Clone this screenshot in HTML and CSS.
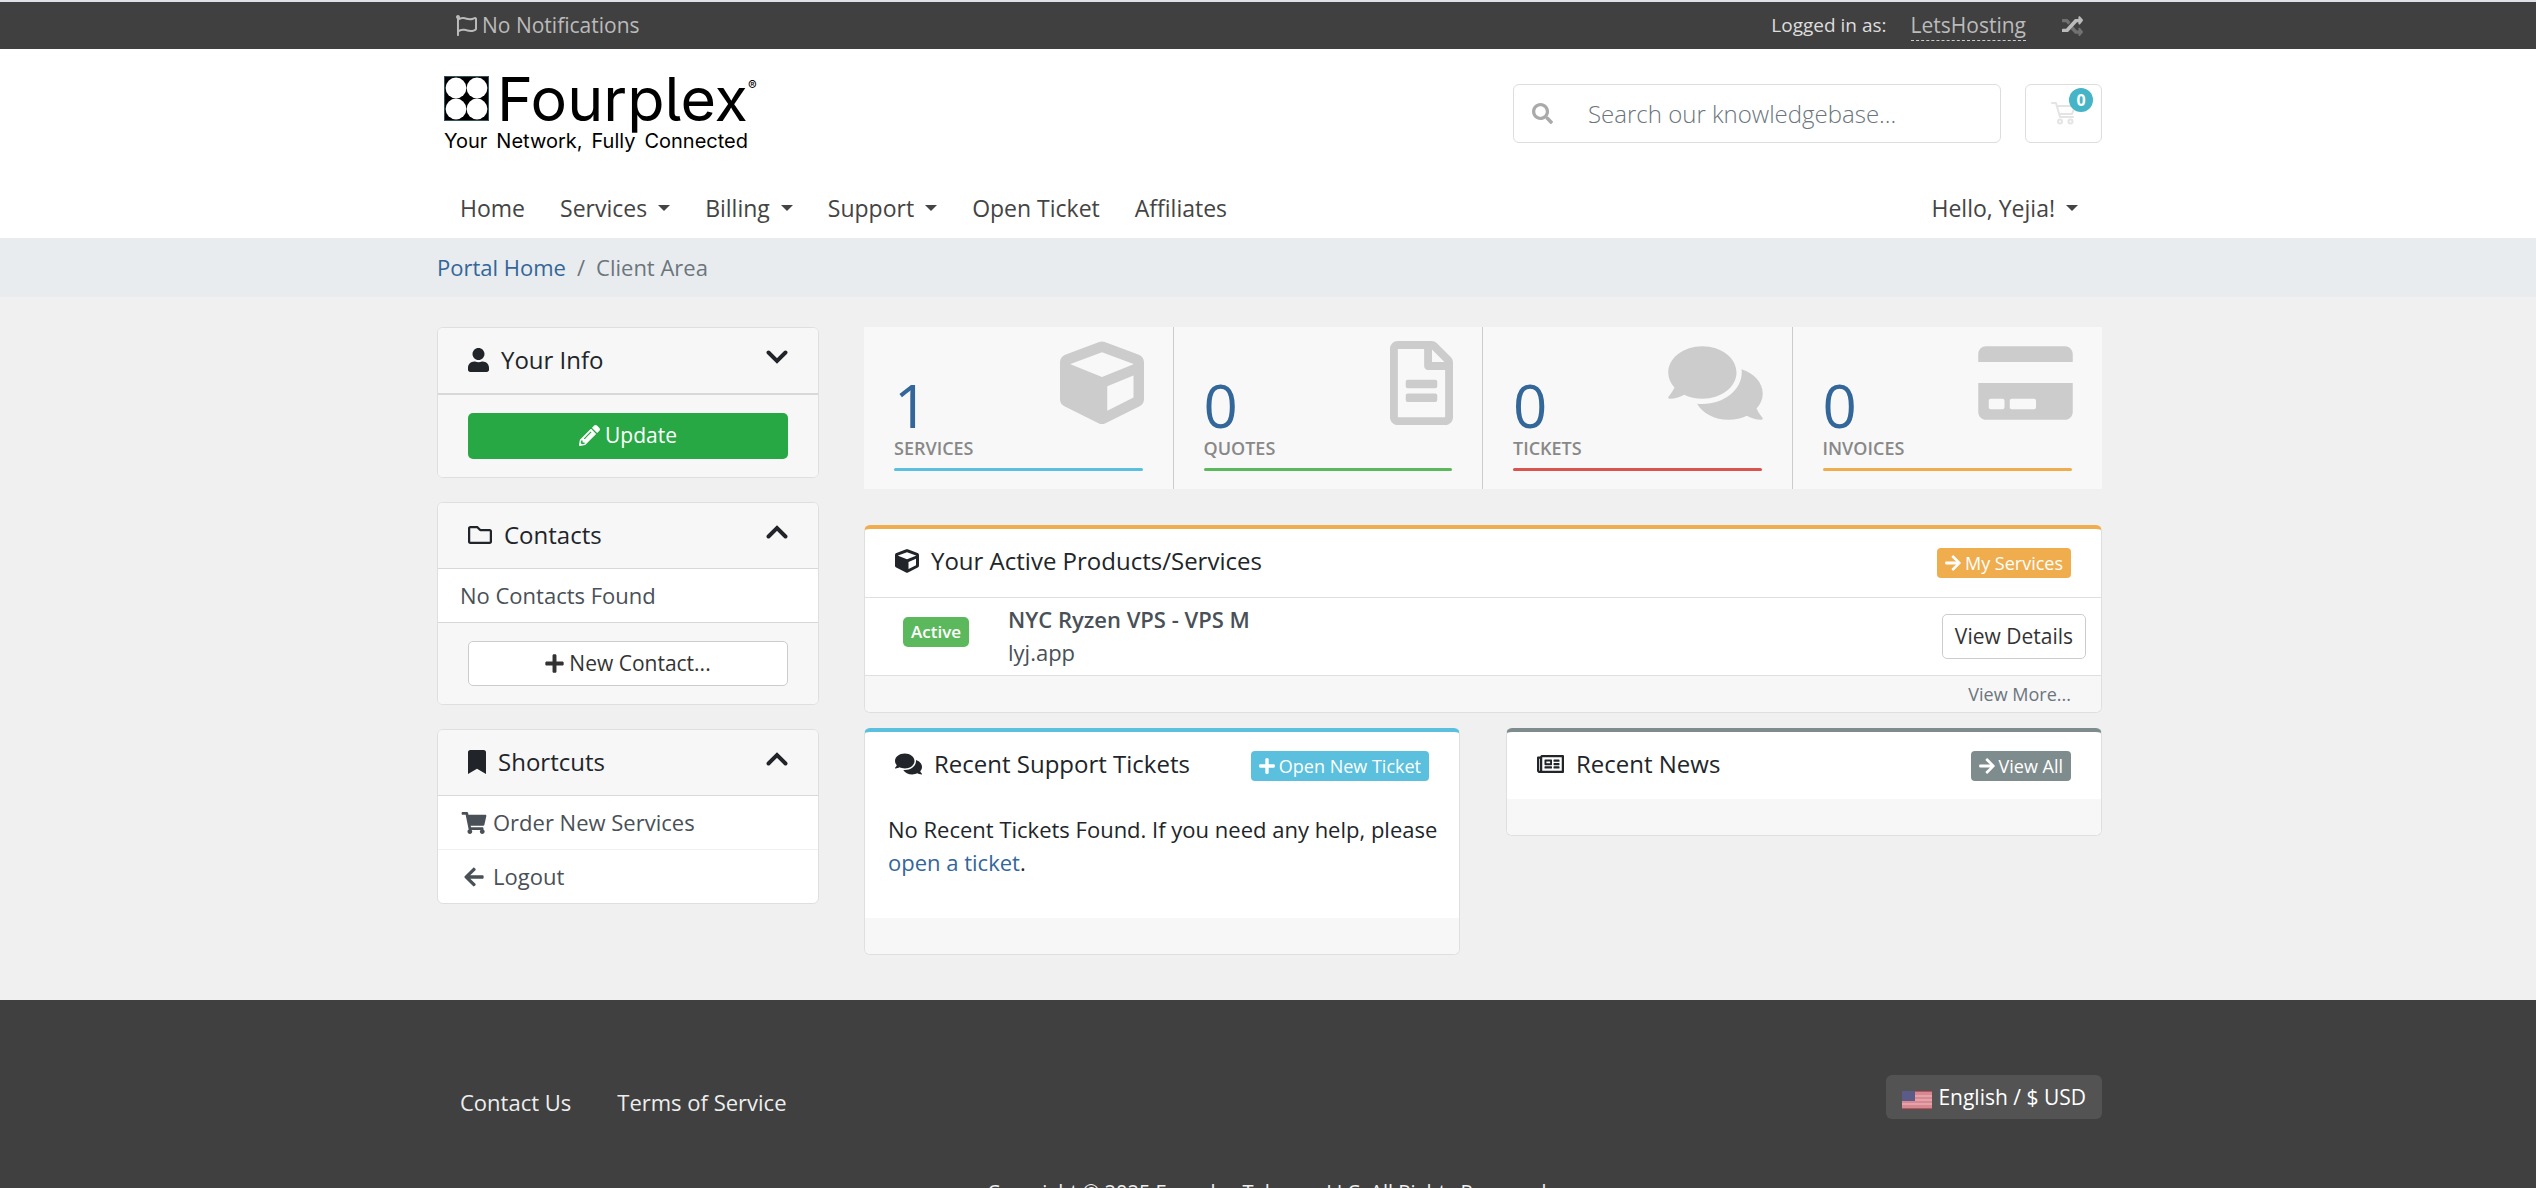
FILE: index.html
```html
<!DOCTYPE html>
<html lang="en">
<head>
<meta charset="utf-8">
<meta name="viewport" content="width=device-width, initial-scale=1">
<title>Client Area - Fourplex</title>
<link rel="stylesheet" href="styles.css">
</head>
<body>
<svg class="sprite" aria-hidden="true">
  <symbol id="i-flag" viewBox="0 0 512 512"><path d="M336.174 80c-49.132 0-93.305-32-161.913-32-31.301 0-58.303 6.482-80.721 15.168a48.04 48.04 0 0 0 2.142-20.727C93.067 19.575 74.167 1.594 51.201.104 23.242-1.710 0 20.431 0 48c0 17.764 9.657 33.262 24 41.562V496c0 8.837 7.163 16 16 16h16c8.837 0 16-7.163 16-16v-83.443C109.869 395.280 143.259 384 199.826 384c49.132 0 93.305 32 161.913 32 58.479 0 101.972-22.617 128.548-39.981C503.846 367.161 512 352.051 512 335.855V95.937c0-34.459-35.264-57.768-66.904-44.117C409.193 67.309 371.641 80 336.174 80zM464 336c-21.783 15.412-60.824 32-102.261 32-59.945 0-102.002-32-161.913-32-43.361 0-96.379 9.403-127.826 24V128c21.784-15.412 60.824-32 102.261-32 59.945 0 102.002 32 161.913 32 43.271 0 96.320-17.366 127.826-32v240z"/></symbol>
  <symbol id="i-random" viewBox="0 0 512 512"><path opacity=".4" d="M24 96h98c7 0 13 3 18 8l68 74-53 58-57-60H24c-13 0-24-11-24-24v-32c0-13 11-24 24-24zM270 276l53 57 42 43h35v-40c0-21 26-32 41-17l64 80c9 9 9 25 0 34l-64 72c-15 15-41 4-41-17v-32h-71c-7 0-13-3-18-8l-95-100z"/><path d="M0 416v-56c0-13 11-24 24-24h74l213-232c5-5 11-8 18-8h71V56c0-21 26-32 41-17l64 72c9 9 9 25 0 34l-64 80c-15 15-41 4-41-17v-32h-35L152 408c-5 5-11 8-18 8z"/></symbol>
  <symbol id="i-search" viewBox="0 0 512 512"><path d="M505 442.700L405.300 343c-4.500-4.500-10.600-7-17-7H372c27.600-35.300 44-79.700 44-128C416 93.100 322.900 0 208 0S0 93.100 0 208s93.100 208 208 208c48.300 0 92.700-16.400 128-44v16.300c0 6.400 2.500 12.500 7 17l99.700 99.700c9.400 9.400 24.600 9.400 33.900 0l28.300-28.300c9.400-9.400 9.400-24.600.1-34zM208 336c-70.700 0-128-57.200-128-128 0-70.700 57.200-128 128-128 70.700 0 128 57.200 128 128 0 70.700-57.200 128-128 128z"/></symbol>
  <symbol id="i-cart-line" viewBox="0 0 24 24"><g fill="none" stroke="currentColor" stroke-width="2" stroke-linecap="round" stroke-linejoin="round"><path d="M1 2h4l4 14h13M6 5h18l-3 8H8"/><circle cx="9" cy="20.500" r="2"/><circle cx="19.500" cy="20.500" r="2"/></g></symbol>
  <symbol id="i-user" viewBox="0 0 448 512"><path d="M224 256c70.700 0 128-57.300 128-128S294.700 0 224 0 96 57.300 96 128s57.300 128 128 128zm89.600 32h-16.700c-22.200 10.200-46.900 16-72.900 16s-50.600-5.800-72.900-16h-16.700C60.200 288 0 348.200 0 422.400V464c0 26.500 21.500 48 48 48h352c26.500 0 48-21.500 48-48v-41.600c0-74.200-60.200-134.400-134.400-134.400z"/></symbol>
  <symbol id="i-chevron" viewBox="0 0 22 14"><path d="M2.500 2.500L11 11l8.500-8.500" fill="none" stroke="currentColor" stroke-width="3.900" stroke-linecap="round"/></symbol>
  <symbol id="i-pencil" viewBox="0 0 512 512"><path d="M497.900 142.100l-46.100 46.100c-4.700 4.700-12.300 4.700-17 0l-111-111c-4.700-4.700-4.700-12.300 0-17l46.100-46.100c18.700-18.700 49.100-18.700 67.900 0l60.100 60.100c18.800 18.700 18.800 49.100 0 67.900zM284.200 99.800L21.600 362.400.4 483.900c-2.900 16.400 11.400 30.600 27.800 27.800l121.500-21.300 262.600-262.600c4.700-4.700 4.700-12.300 0-17l-111-111c-4.800-4.700-12.400-4.700-17.100 0zM124.100 339.900c-5.500-5.500-5.500-14.300 0-19.800l154-154c5.500-5.500 14.300-5.500 19.800 0s5.500 14.300 0 19.800l-154 154c-5.500 5.500-14.300 5.500-19.800 0zM88 424h48v36.300l-64.500 11.300-31.100-31.100L51.700 376H88v48z"/></symbol>
  <symbol id="i-folder" viewBox="0 0 512 512"><path d="M464 128H272l-54.630-54.630c-6-6-14.140-9.370-22.630-9.370H48C21.490 64 0 85.490 0 112v288c0 26.510 21.490 48 48 48h416c26.510 0 48-21.490 48-48V176c0-26.510-21.490-48-48-48zm0 272H48V112h140.120l54.630 54.630c6 6 14.140 9.370 22.630 9.370H464v224z"/></symbol>
  <symbol id="i-plus" viewBox="0 0 448 512"><path d="M416 208H272V64c0-17.670-14.330-32-32-32h-32c-17.670 0-32 14.330-32 32v144H32c-17.670 0-32 14.330-32 32v32c0 17.670 14.330 32 32 32h144v144c0 17.670 14.330 32 32 32h32c17.670 0 32-14.330 32-32V304h144c17.670 0 32-14.330 32-32v-32c0-17.670-14.330-32-32-32z"/></symbol>
  <symbol id="i-bookmark" viewBox="0 0 384 512"><path d="M0 512V48C0 21.490 21.490 0 48 0h288c26.510 0 48 21.490 48 48v464L192 400 0 512z"/></symbol>
  <symbol id="i-cart" viewBox="0 0 576 512"><path d="M528.120 301.319l47.273-208C578.806 78.301 567.391 64 551.990 64H159.208l-9.166-44.810C147.758 8.021 137.930 0 126.529 0H24C10.745 0 0 10.745 0 24v16c0 13.255 10.745 24 24 24h69.883l70.248 343.435C147.325 417.100 136 435.222 136 456c0 30.928 25.072 56 56 56s56-25.072 56-56c0-15.674-6.447-29.835-16.824-40h209.647C430.447 426.165 424 440.326 424 456c0 30.928 25.072 56 56 56s56-25.072 56-56c0-22.172-12.888-41.332-31.579-50.405l5.517-24.276c3.413-15.018-8.002-29.319-23.403-29.319H218.117l-6.545-32h293.145c11.206 0 20.920-7.754 23.403-18.681z"/></symbol>
  <symbol id="i-left" viewBox="0 0 448 512"><path d="M257.500 445.100l-22.200 22.200c-9.400 9.400-24.600 9.400-33.900 0L7 273c-9.400-9.400-9.400-24.600 0-33.900L201.400 44.700c9.400-9.400 24.600-9.400 33.900 0l22.200 22.200c9.500 9.500 9.300 25-.4 34.300L136.600 216H424c13.300 0 24 10.700 24 24v32c0 13.300-10.700 24-24 24H136.600l120.500 114.800c9.800 9.300 10 24.800.4 34.300z"/></symbol>
  <symbol id="i-right" viewBox="0 0 448 512"><path d="M190.500 66.900l22.200-22.200c9.400-9.400 24.600-9.400 33.900 0L441 239c9.400 9.400 9.400 24.600 0 33.900L246.600 467.300c-9.400 9.400-24.600 9.400-33.900 0l-22.200-22.200c-9.500-9.500-9.300-25 .4-34.300L311.400 296H24c-13.300 0-24-10.700-24-24v-32c0-13.300 10.700-24 24-24h287.400L190.900 101.200c-9.800-9.300-10-24.800-.4-34.300z"/></symbol>
  <symbol id="i-cube" viewBox="0 0 512 512"><path d="M239.100 6.300l-208 78c-18.700 7-31.100 25-31.100 45v225.100c0 18.200 10.300 34.800 26.500 42.900l208 104c13.500 6.800 29.400 6.800 42.900 0l208-104c16.300-8.100 26.500-24.800 26.500-42.900V129.300c0-20-12.400-37.900-31.100-44.900l-208-78C262 2.200 250 2.200 239.100 6.300zM256 68.400l192 72v1.100l-192 78-192-78v-1.100l192-72zm32 356V275.500l160-65v133.900l-160 80z"/></symbol>
  <symbol id="i-file" viewBox="0 0 384 512"><path d="M288 248v28c0 6.600-5.400 12-12 12H108c-6.600 0-12-5.400-12-12v-28c0-6.600 5.400-12 12-12h168c6.600 0 12 5.400 12 12zm-12 72H108c-6.600 0-12 5.400-12 12v28c0 6.600 5.400 12 12 12h168c6.600 0 12-5.400 12-12v-28c0-6.600-5.400-12-12-12zm108-188.100V464c0 26.500-21.500 48-48 48H48c-26.500 0-48-21.500-48-48V48C0 21.500 21.500 0 48 0h204.100C264.800 0 277 5.100 286 14.100L369.900 98c9 8.900 14.100 21.200 14.100 33.900zm-128-80V128h76.100L256 51.900zM336 464V176H232c-13.300 0-24-10.700-24-24V48H48v416h288z"/></symbol>
  <symbol id="i-comments" viewBox="0 0 576 512"><path d="M416 192c0-88.400-93.100-160-208-160S0 103.600 0 192c0 34.300 14.100 65.900 38 92-13.400 30.200-35.500 54.200-35.800 54.500-2.200 2.300-2.800 5.700-1.500 8.700S4.800 352 8 352c36.600 0 66.900-12.300 88.700-25 32.200 15.700 70.300 25 111.300 25 114.900 0 208-71.600 208-160zm122 220c23.900-26 38-57.700 38-92 0-66.900-53.500-124.200-129.300-148.100.9 6.600 1.300 13.300 1.300 20.100 0 105.900-107.700 192-240 192-10.800 0-21.300-.8-31.700-1.900C207.800 439.600 281.800 480 368 480c41 0 79.100-9.200 111.300-25 21.800 12.700 52.100 25 88.700 25 3.200 0 6.100-1.900 7.300-4.800 1.300-2.900.7-6.300-1.500-8.700-.3-.3-22.400-24.200-35.800-54.500z"/></symbol>
  <symbol id="i-card" viewBox="0 0 576 512"><path d="M0 432c0 26.500 21.500 48 48 48h480c26.500 0 48-21.500 48-48V256H0v176zm192-68c0-6.600 5.400-12 12-12h136c6.600 0 12 5.400 12 12v40c0 6.600-5.400 12-12 12H204c-6.600 0-12-5.400-12-12v-40zm-128 0c0-6.600 5.400-12 12-12h72c6.600 0 12 5.400 12 12v40c0 6.600-5.400 12-12 12H76c-6.600 0-12-5.400-12-12v-40zM576 80v48H0V80c0-26.500 21.500-48 48-48h480c26.500 0 48 21.500 48 48z"/></symbol>
  <symbol id="i-news" viewBox="0 0 576 512"><path d="M552 64H112c-20.858 0-38.643 13.377-45.248 32H24c-13.255 0-24 10.745-24 24v272c0 30.928 25.072 56 56 56h496c13.255 0 24-10.745 24-24V88c0-13.255-10.745-24-24-24zM48 392V144h16v248c0 4.411-3.589 8-8 8s-8-3.589-8-8zm480 8H111.422c.374-2.614.578-5.283.578-8V112h416v288zM172 280h136c6.627 0 12-5.373 12-12v-96c0-6.627-5.373-12-12-12H172c-6.627 0-12 5.373-12 12v96c0 6.627 5.373 12 12 12zm28-80h80v40h-80v-40zm-40 140v-24c0-6.627 5.373-12 12-12h136c6.627 0 12 5.373 12 12v24c0 6.627-5.373 12-12 12H172c-6.627 0-12-5.373-12-12zm192 0v-24c0-6.627 5.373-12 12-12h104c6.627 0 12 5.373 12 12v24c0 6.627-5.373 12-12 12H364c-6.627 0-12-5.373-12-12zm0-144v-24c0-6.627 5.373-12 12-12h104c6.627 0 12 5.373 12 12v24c0 6.627-5.373 12-12 12H364c-6.627 0-12-5.373-12-12zm0 72v-24c0-6.627 5.373-12 12-12h104c6.627 0 12 5.373 12 12v24c0 6.627-5.373 12-12 12H364c-6.627 0-12-5.373-12-12z"/></symbol>
</svg>

<header>
  <div class="topbar">
    <div class="container topbar-inner">
      <button class="notifications" type="button"><svg class="icon-21"><use href="#i-flag"/></svg>No Notifications</button>
      <div class="account">
        <span class="account-label">Logged in as:</span>
        <a class="account-name" href="#">LetsHosting</a>
        <button class="switch" type="button" aria-label="Switch account"><svg class="icon-21"><use href="#i-random"/></svg></button>
      </div>
    </div>
  </div>

  <div class="masthead">
    <div class="container masthead-row">
      <a class="logo" href="#" aria-label="Fourplex">
        <span class="logo-main">
          <svg class="logo-mark" viewBox="0 0 45 45"><rect x=".5" y=".5" width="44" height="44" stroke="#35525c"/><g fill="#fff"><circle cx="12" cy="12" r="10.400"/><circle cx="33" cy="12" r="10.400"/><circle cx="12" cy="33" r="10.400"/><circle cx="33" cy="33" r="10.400"/></g></svg>
          <span class="logo-name">Fourplex</span><span class="logo-reg">®</span>
        </span>
        <span class="logo-tagline"><span>Your</span> <span>Network,</span> <span>Fully</span> <span>Connected</span></span>
      </a>
      <div class="tools">
        <form class="search">
          <button type="submit" aria-label="Search"><svg class="icon-21"><use href="#i-search"/></svg></button>
          <input type="text" placeholder="Search our knowledgebase..." aria-label="Search our knowledgebase">
        </form>
        <a class="cart" href="#" aria-label="Shopping cart"><svg class="icon-24"><use href="#i-cart-line"/></svg><span class="cart-count">0</span></a>
      </div>
    </div>
    <nav class="container menu">
      <a href="#">Home</a>
      <button class="drop" type="button">Services</button>
      <button class="drop" type="button">Billing</button>
      <button class="drop" type="button">Support</button>
      <a href="#">Open Ticket</a>
      <a href="#">Affiliates</a>
      <button class="drop menu-user" type="button">Hello, Yejia!</button>
    </nav>
  </div>
</header>

<nav class="breadcrumb">
  <ol class="container">
    <li><a href="#">Portal Home</a></li>
    <li>Client Area</li>
  </ol>
</nav>

<main class="container layout">
  <aside class="sidebar">
    <section class="card">
      <h3 class="side-head side-head-thick"><svg class="w-user"><use href="#i-user"/></svg>Your Info<svg class="chevron"><use href="#i-chevron"/></svg></h3>
      <div class="side-foot"><button class="btn btn-green" type="button"><svg class="icon-21"><use href="#i-pencil"/></svg>Update</button></div>
    </section>
    <section class="card">
      <h3 class="side-head"><svg class="w-folder"><use href="#i-folder"/></svg>Contacts<svg class="chevron chevron-up"><use href="#i-chevron"/></svg></h3>
      <div class="side-item side-last">No Contacts Found</div>
      <div class="side-foot"><button class="btn btn-plain" type="button"><svg class="icon-plus"><use href="#i-plus"/></svg>New Contact...</button></div>
    </section>
    <section class="card">
      <h3 class="side-head"><svg class="w-bookmark"><use href="#i-bookmark"/></svg>Shortcuts<svg class="chevron chevron-up"><use href="#i-chevron"/></svg></h3>
      <a class="side-item" href="#"><svg class="icon-fw"><use href="#i-cart"/></svg>Order New Services</a>
      <a class="side-item" href="#"><svg class="icon-fw"><use href="#i-left"/></svg>Logout</a>
    </section>
  </aside>

  <div class="content">
    <div class="tiles">
      <a class="tile tile-blue" href="#"><svg class="tile-cube"><use href="#i-cube"/></svg><span class="stat">1</span><span class="tile-title">Services</span></a>
      <a class="tile tile-green" href="#"><svg class="tile-file"><use href="#i-file"/></svg><span class="stat">0</span><span class="tile-title">Quotes</span></a>
      <a class="tile tile-red" href="#"><svg class="tile-wide"><use href="#i-comments"/></svg><span class="stat">0</span><span class="tile-title">Tickets</span></a>
      <a class="tile tile-gold" href="#"><svg class="tile-wide"><use href="#i-card"/></svg><span class="stat">0</span><span class="tile-title">Invoices</span></a>
    </div>

    <section class="card panel panel-gold">
      <h3 class="panel-head panel-head-line"><svg class="icon-24"><use href="#i-cube"/></svg>Your Active Products/Services<a class="btn-sm bg-gold" href="#"><svg><use href="#i-right"/></svg>My Services</a></h3>
      <div class="product">
        <span class="badge">Active</span>
        <a class="product-name" href="#"><b>NYC Ryzen VPS - VPS M</b><span>lyj.app</span></a>
        <button class="btn btn-plain btn-details" type="button">View Details</button>
      </div>
      <div class="panel-foot"><a href="#">View More...</a></div>
    </section>

    <div class="panels">
      <section class="card panel panel-blue">
        <h3 class="panel-head"><svg class="w-wide"><use href="#i-comments"/></svg>Recent Support Tickets<a class="btn-sm bg-blue" href="#"><svg><use href="#i-plus"/></svg>Open New Ticket</a></h3>
        <p class="panel-text">No Recent Tickets Found. If you need any help, please <a href="#">open a ticket</a>.</p>
        <div class="panel-foot"></div>
      </section>
      <section class="card panel panel-gray">
        <h3 class="panel-head"><svg class="w-wide"><use href="#i-news"/></svg>Recent News<a class="btn-sm bg-gray" href="#"><svg><use href="#i-right"/></svg>View All</a></h3>
        <div class="panel-foot"></div>
      </section>
    </div>
  </div>
</main>

<footer class="footer">
  <div class="container">
    <div class="footer-row">
      <nav class="footer-links"><a href="#">Contact Us</a><a href="#">Terms of Service</a></nav>
      <button class="locale" type="button">
        <svg class="us" viewBox="0 0 30 18"><rect width="30" height="18" fill="#d98791"/><path d="M0 5h30M0 9h30M0 13h30" stroke="#e2a3aa" stroke-width="2"/><path d="M0 .5h30M0 17.500h30" stroke="#b9525c"/><rect width="13" height="10" fill="#5b5b87"/></svg>English / $ USD
      </button>
    </div>
    <p class="copyright">Copyright © 2025 Fourplex Telecom LLC. All Rights Reserved.</p>
  </div>
</footer>
</body>
</html>
```
FILE: styles.css
```css
*, *::before, *::after { box-sizing: border-box; }

body {
  margin: 0;
  border-top: 2px solid #dee2e6;
  background: #f0f0f0;
  color: #212529;
  font: 400 22px/33px "Open Sans", "Noto Sans", sans-serif;
  min-height: 100vh;
}

a { color: #336699; text-decoration: none; }
button, input { font: inherit; color: inherit; }
button { margin: 0; padding: 0; border: 0; background: none; cursor: pointer; }
svg { fill: currentColor; flex: none; }
h3, p, ol { margin: 0; padding: 0; font-weight: 400; }

.sprite { position: absolute; width: 0; height: 0; }
.icon-21 { width: 21px; height: 21px; }
.icon-24 { width: 24px; height: 24px; }

.container { max-width: 1668px; margin: 0 auto; padding-left: 3px; }

/* Top bar */
.topbar { background: #404040; color: #bbb; font-size: 21px; }
.topbar-inner { display: flex; justify-content: space-between; align-items: center; height: 47px; }
.notifications { display: flex; align-items: center; gap: 5px; margin-left: 19px; }
.account { display: flex; align-items: center; gap: 24px; margin-right: 19px; }
.account-label { font-size: 19px; color: #ddd; }
.account-name { color: inherit; line-height: 29px; border-bottom: 1px dashed #ccc; }
.switch { display: flex; margin-left: 12px; }

/* Masthead */
.masthead { background: #fff; color: #444; }
.masthead-row { display: flex; justify-content: space-between; align-items: flex-start; padding-top: 24px; height: 132px; }
.logo { display: block; margin-left: 7px; color: #000; font-family: Inter, sans-serif; }
.logo-main { display: flex; align-items: flex-start; }
.logo-mark { width: 45px; height: 45px; margin-top: 3px; }
.logo-name { margin-left: 8px; font-size: 61px; line-height: 53px; font-feature-settings: "cv05"; }
.logo-reg { font-size: 13px; line-height: 24px; }
.logo-tagline { display: flex; justify-content: space-between; width: 304px; padding-top: 2px; font-size: 20px; line-height: 26px; }
.tools { display: flex; gap: 24px; padding-top: 11px; }
.search { display: flex; align-items: center; width: 488px; height: 59px; border: 1px solid #ddd; border-radius: 6px; }
.search button { display: flex; width: 74px; padding-left: 18px; color: #aaa; }
.search input { flex: 1; min-width: 0; padding: 0; border: 0; outline: 0; background: none; font-size: 24px; font-weight: 300; }
.search input::placeholder { color: #6c757d; opacity: 1; }
.cart { position: relative; display: flex; width: 77px; height: 59px; padding: 16px 25px; border: 1px solid #ddd; border-radius: 6px; color: #e4e4e4; }
.cart-count { position: absolute; top: 3px; right: 8px; width: 24px; height: 24px; border-radius: 12px; background: #44b4c6; color: #fff; font-size: 16px; font-weight: 700; line-height: 24px; text-align: center; }

.menu { display: flex; align-items: center; gap: 35px; height: 57px; padding: 0 24px 3px 26px; font-size: 23px; }
.menu a { color: inherit; }
.drop { display: flex; align-items: center; gap: 11px; }
.drop::after { content: ""; border: 6px solid transparent; border-top-color: currentColor; border-bottom: 0; }
.menu-user { margin-left: auto; }

/* Breadcrumb */
.breadcrumb { background: #e8ecef; color: #6c757d; }
.breadcrumb ol { display: flex; height: 59px; align-items: center; list-style: none; }
.breadcrumb li + li::before { content: "/"; padding: 0 11px; }

/* Main layout */
.layout { display: grid; grid-template-columns: 382px minmax(0, 1fr); gap: 45px; padding-top: 30px; padding-bottom: 45px; align-items: start; }
.sidebar { display: grid; gap: 24px; }
.card { border: 1px solid #dfdfdf; border-radius: 6px; background: #fff; overflow: hidden; }

.side-head { display: flex; align-items: center; gap: 12px; padding: 14px 30px 16px; border-bottom: 1px solid #d8d8d8; background: #f7f7f7; font-size: 24px; line-height: 35px; }
.side-head-thick { border-bottom-width: 2px; }
.w-user { width: 21px; height: 24px; }
.w-folder { width: 24px; height: 24px; }
.w-bookmark { width: 18px; height: 24px; }
.w-wide { width: 27px; height: 24px; }
.chevron { width: 22px; height: 14px; margin: 0 0 6px auto; }
.chevron-up { transform: rotate(180deg); }
.side-item { display: flex; align-items: center; gap: 5px; padding: 10px 22px; color: #495057; }
.side-item + .side-item { border-top: 1px solid #f0f0f0; }
.side-last { border-bottom: 1px solid #d8d8d8; }
.icon-fw { width: 28px; height: 22px; }
.side-foot { padding: 18px 30px; background: #f7f7f7; }

.btn { display: flex; align-items: center; justify-content: center; gap: 5px; width: 100%; height: 46px; border-radius: 5px; font-size: 21px; }
.btn-green { padding-bottom: 1px; background: #28a745; color: #fff; }
.btn-plain { height: 45px; border: 1px solid #ccc; background: #fff; color: #333; }
.icon-plus { width: 19px; height: 21px; }

/* Stat tiles */
.tiles { display: grid; grid-template-columns: repeat(4, 1fr); margin-bottom: 36px; }
.tile { position: relative; display: flex; flex-direction: column; padding: 44px 30px 18px; border-right: 1px solid #ccc; background: #f8f8f8; }
.tile:last-child { border-right: 0; }
.tile svg { position: absolute; top: 14px; right: 29px; height: 84px; color: #ccc; }
.tile-cube { width: 84px; }
.tile-file { width: 63px; }
.tile-wide { width: 95px; }
.stat { color: #336699; font-size: 60px; line-height: 68px; }
.tile-title { margin-bottom: 11px; color: #888; font-size: 18px; font-weight: 600; line-height: 18px; text-transform: uppercase; }
.tile::after { content: ""; height: 3px; border-radius: 2px; background: currentColor; }
.tile-blue { color: #5bc0de; }
.tile-green { color: #5cb85c; }
.tile-red { color: #d9534f; }
.tile-gold { color: #f0ad4e; }

/* Panels */
.panel { border-top-width: 4px; }
.panel-gold { border-top-color: #f0ad4e; margin-bottom: 15px; }
.panel-blue { border-top-color: #5bc0de; }
.panel-gray { border-top-color: #7f8c8d; }
.panel-head { display: flex; align-items: center; gap: 12px; padding: 14px 30px 18px; font-size: 24px; line-height: 35px; }
.panel-head-line { padding-bottom: 19px; border-bottom: 1px solid #dfdfdf; }
.btn-sm { display: flex; align-items: center; gap: 4px; height: 30px; margin: 5px 0 0 auto; padding: 0 8px; border-radius: 4px; color: #fff; font-size: 18px; }
.btn-sm svg { width: 16px; height: 18px; }
.bg-gold { background: #f0ad4e; }
.bg-blue { background: #5bc0de; }
.bg-gray { background: #7f8c8d; }
.product { display: grid; grid-template-columns: 105px 1fr auto; align-items: center; padding: 5px 15px 6px 38px; }
.badge { justify-self: start; margin-bottom: 8px; padding: 0 8px; border-radius: 5px; background: #5cb85c; color: #fff; font-size: 17px; font-weight: 600; line-height: 30px; }
.product-name { display: grid; color: #495057; }
.product-name b { font-weight: 600; }
.btn-details { width: auto; padding: 0 12px; }
.panel-foot { display: flex; justify-content: flex-end; min-height: 36px; padding: 0 30px; background: #f7f7f7; font-size: 18px; line-height: 36px; }
.product + .panel-foot { border-top: 1px solid #dfdfdf; }
.panel-foot a { color: #6c757d; }
.panel-text { padding: 14px 15px 39px 23px; }
.panels { display: grid; grid-template-columns: 1fr 1fr; gap: 46px; align-items: start; }

/* Footer */
.footer { background: #404040; color: #eee; padding: 75px 0; }
.footer-row { display: flex; align-items: flex-start; justify-content: space-between; }
.footer-links { display: flex; gap: 46px; padding: 11px 0 0 23px; }
.footer-links a { color: inherit; }
.locale { display: flex; align-items: center; gap: 6px; height: 44px; padding: 0 16px; border-radius: 6px; background: #535353; color: #fff; font-size: 21px; }
.us { width: 30px; height: 18px; margin-top: 5px; }
.copyright { margin-top: 56px; font-size: 20px; text-align: center; }
```
